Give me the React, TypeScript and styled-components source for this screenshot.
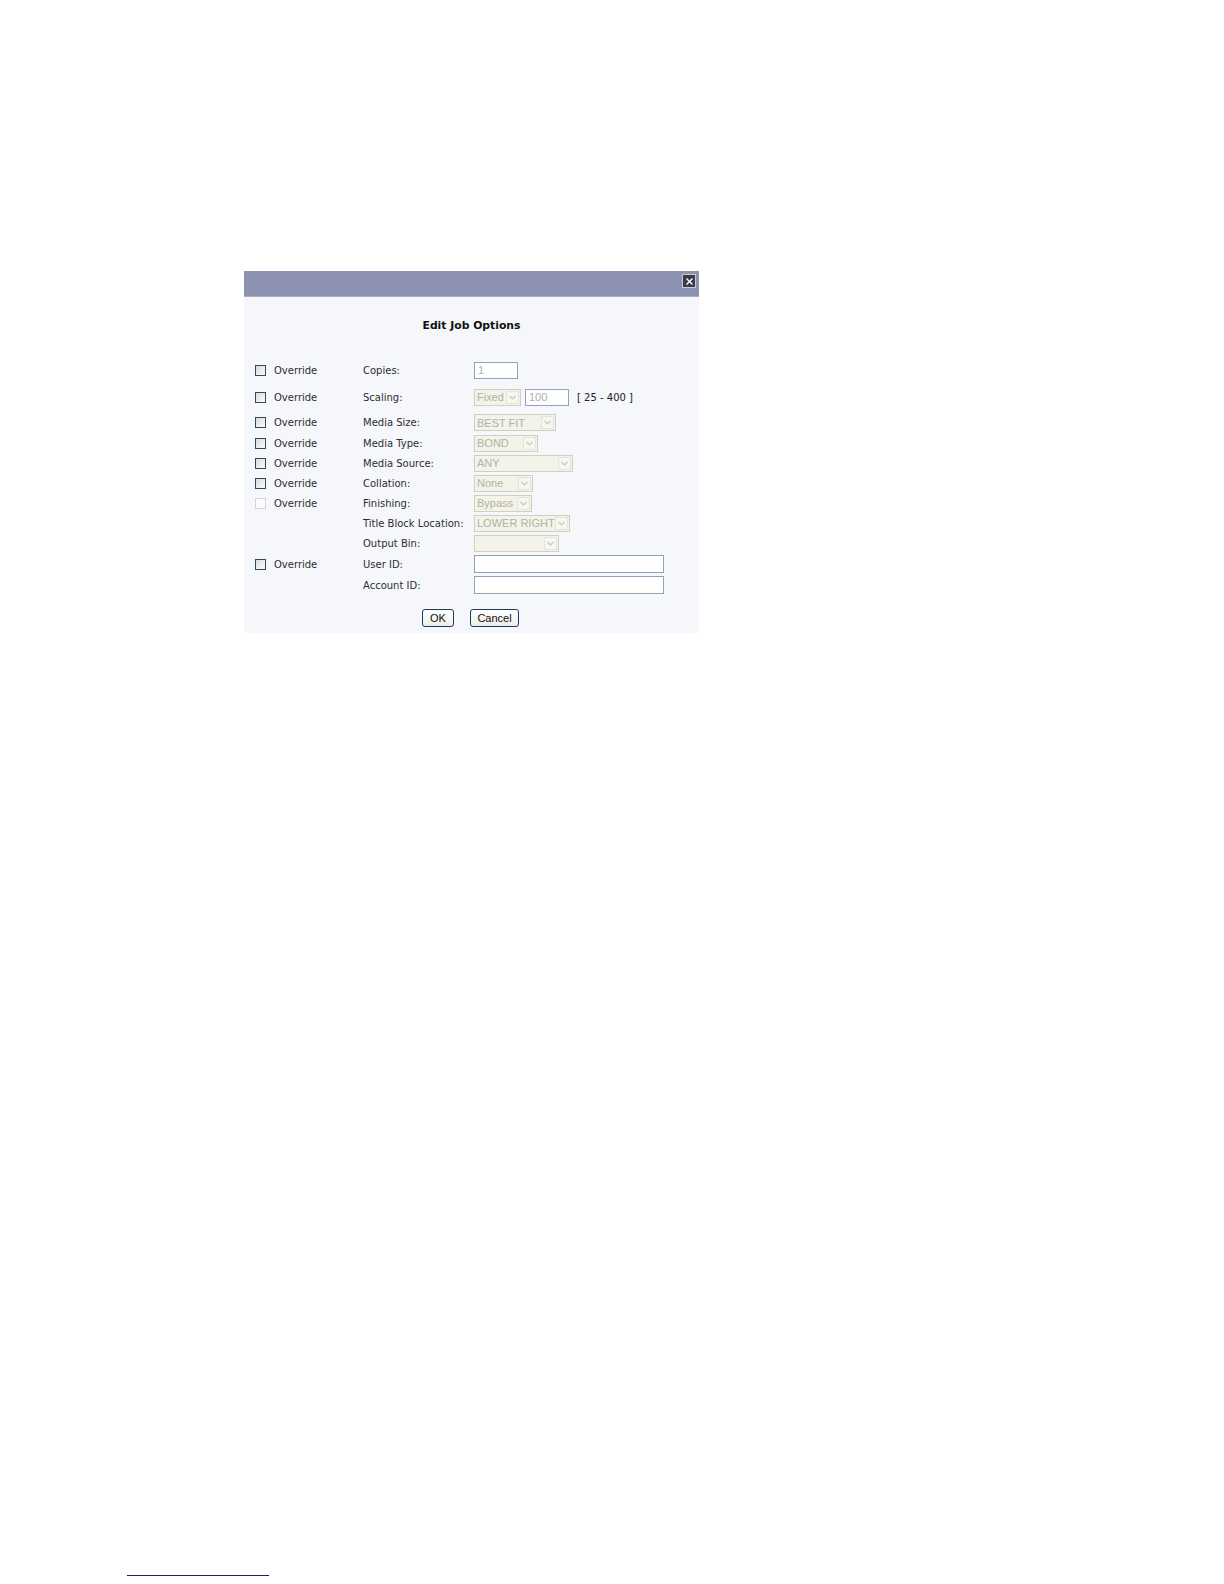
import React from "react";
import styled, { createGlobalStyle } from "styled-components";

const Global = createGlobalStyle`
  html, body { margin: 0; padding: 0; background: #ffffff; }
  body { font-family: "DejaVu Sans", Verdana, sans-serif; }
`;

const Page = styled.div`
  min-height: 1584px;
  display: flex;
  flex-direction: column;
  box-sizing: border-box;
  padding-top: 271px;
`;

const Dialog = styled.div`
  margin-left: 244px;
  width: 455px;
  background: #f5f7fb;
  display: flex;
  flex-direction: column;
`;

const TitleBar = styled.div`
  height: 26px;
  background: #8d92b1;
  display: flex;
  justify-content: flex-end;
  align-items: flex-start;
  padding: 3px 3px 0 0;
  box-sizing: border-box;
  border-bottom: 1px solid #a9adc4;
`;

const CloseButton = styled.div`
  width: 14px;
  height: 14px;
  box-sizing: border-box;
  background: #3a3b45;
  border: 1px solid #c9ccd8;
  display: flex;
  align-items: center;
  justify-content: center;
`;

const Body = styled.div`
  padding: 22px 0 6px 11px;
  display: flex;
  flex-direction: column;
`;

const Title = styled.div`
  font-weight: bold;
  font-size: 10.8px;
  line-height: 14px;
  color: #111;
  text-align: center;
  padding-right: 11px;
  margin-bottom: 25px;
`;

const Row = styled.div<{ $h: number }>`
  display: grid;
  grid-template-columns: 19px 89px 111px 1fr;
  align-items: center;
  height: ${(p) => p.$h}px;
  font-size: 10px;
  color: #2e2e2e;
`;

const Check = styled.span<{ $disabled?: boolean }>`
  width: 11px;
  height: 11px;
  box-sizing: border-box;
  border: 1px solid ${(p) => (p.$disabled ? "#d2d6dc" : "#2c4a66")};
  background: ${(p) => (p.$disabled ? "#fbfbfb" : "linear-gradient(135deg, #dcdcd6, #fbfbf8)")};
`;

const Text = styled.span`
  white-space: nowrap;
`;

const Controls = styled.div`
  display: flex;
  align-items: center;
  gap: 4px;
`;

const TextBox = styled.div<{ $w: number; $h?: number }>`
  width: ${(p) => p.$w}px;
  height: ${(p) => p.$h ?? 17}px;
  box-sizing: border-box;
  border: 1px solid #8fa4bc;
  background: #ffffff;
  font-family: "Liberation Sans", Arial, sans-serif;
  font-size: 11px;
  color: #adadad;
  padding-left: 3px;
  line-height: 15px;
`;

const Select = styled.div<{ $w: number }>`
  width: ${(p) => p.$w}px;
  height: 17px;
  box-sizing: border-box;
  border: 1px solid #cfcfc2;
  background: #f3f3e9;
  display: flex;
  align-items: center;
  justify-content: space-between;
  font-family: "Liberation Sans", Arial, sans-serif;
  font-size: 11px;
  color: #b2b2a3;
  padding-left: 2px;
  white-space: nowrap;
  overflow: hidden;
`;

const Arrow = styled.span`
  flex: none;
  width: 13px;
  height: 13px;
  margin-right: 1px;
  box-sizing: border-box;
  border: 1px solid #e4e4dc;
  background: #f7f7f2;
  display: flex;
  align-items: center;
  justify-content: center;
`;

const Range = styled.span`
  font-size: 10px;
  color: #222;
  margin-left: 4px;
  white-space: nowrap;
`;

const Buttons = styled.div`
  display: flex;
  justify-content: flex-start;
  gap: 16px;
  margin-top: 13px;
  padding-left: 167px;
`;

const Button = styled.div<{ $w: number }>`
  width: ${(p) => p.$w}px;
  height: 18px;
  box-sizing: border-box;
  border: 1px solid #1d3c5a;
  border-radius: 3px;
  background: linear-gradient(#ffffff, #eeeee8);
  font-family: "Liberation Sans", Arial, sans-serif;
  font-size: 11px;
  color: #111;
  display: flex;
  align-items: center;
  justify-content: center;
`;

const Spacer = styled.div`
  flex: 1;
`;

const FootLine = styled.div`
  margin-left: 127px;
  width: 142px;
  height: 1px;
  background: #1b1b7c;
  margin-bottom: 8px;
`;

const Chevron = () => (
  <svg width="7" height="5" viewBox="0 0 7 5">
    <path d="M0.5 0.8 L3.5 3.8 L6.5 0.8" fill="none" stroke="#c3c3ba" strokeWidth="1.2" />
  </svg>
);

const DropDown = ({ w, value }: { w: number; value?: string }) => (
  <Select $w={w}>
    <span>{value ?? ""}</span>
    <Arrow>
      <Chevron />
    </Arrow>
  </Select>
);

type RowDef = {
  h: number;
  check?: "on" | "disabled";
  label: string;
  control: React.ReactNode;
};

const rows: RowDef[] = [
  { h: 24, check: "on", label: "Copies:", control: <TextBox $w={44}>1</TextBox> },
  {
    h: 30,
    check: "on",
    label: "Scaling:",
    control: (
      <Controls>
        <DropDown w={47} value="Fixed" />
        <TextBox $w={44}>100</TextBox>
        <Range>[ 25 - 400 ]</Range>
      </Controls>
    ),
  },
  { h: 21, check: "on", label: "Media Size:", control: <DropDown w={82} value="BEST FIT" /> },
  { h: 20, check: "on", label: "Media Type:", control: <DropDown w={64} value="BOND" /> },
  { h: 20, check: "on", label: "Media Source:", control: <DropDown w={99} value="ANY" /> },
  { h: 20, check: "on", label: "Collation:", control: <DropDown w={59} value="None" /> },
  { h: 20, check: "disabled", label: "Finishing:", control: <DropDown w={58} value="Bypass" /> },
  { h: 20, label: "Title Block Location:", control: <DropDown w={96} value="LOWER RIGHT" /> },
  { h: 21, label: "Output Bin:", control: <DropDown w={85} /> },
  { h: 20, check: "on", label: "User ID:", control: <TextBox $w={190} $h={18} /> },
  { h: 22, label: "Account ID:", control: <TextBox $w={190} $h={18} /> },
];

export default function App() {
  return (
    <>
      <Global />
      <Page>
        <Dialog>
          <TitleBar>
            <CloseButton>
              <svg width="7" height="7" viewBox="0 0 7 7">
                <path d="M0.5 0.5 L6.5 6.5 M6.5 0.5 L0.5 6.5" stroke="#ffffff" strokeWidth="1.4" />
              </svg>
            </CloseButton>
          </TitleBar>
          <Body>
            <Title>Edit Job Options</Title>
            {rows.map((r) => (
              <Row key={r.label} $h={r.h}>
                {r.check ? <Check $disabled={r.check === "disabled"} /> : <span />}
                <Text>{r.check ? "Override" : ""}</Text>
                <Text>{r.label}</Text>
                <div>{r.control}</div>
              </Row>
            ))}
            <Buttons>
              <Button $w={32}>OK</Button>
              <Button $w={49}>Cancel</Button>
            </Buttons>
          </Body>
        </Dialog>
        <Spacer />
        <FootLine />
      </Page>
    </>
  );
}
